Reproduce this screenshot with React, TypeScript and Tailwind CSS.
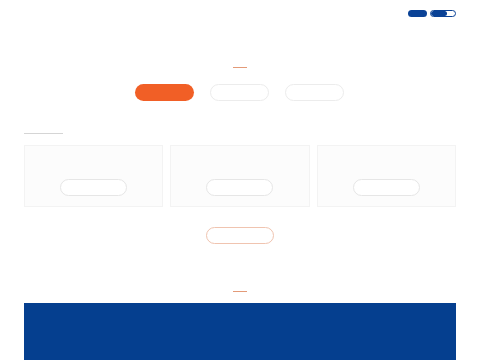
const Landing = () => {
    const tabs = ['active', 'idle', 'idle'];
    const cards = [1, 2, 3];

    return (
        <div className="w-[480px] h-[360px] bg-white overflow-hidden" style={{ fontFamily: '"Liberation Sans", Arial, sans-serif' }}>
            {/* Top bar */}
            <div className="flex justify-end items-center gap-[3px] pt-[10px] pr-[24px]">
                <div className="w-[19px] h-[7px] rounded-full bg-[#0a4296]" />
                <div className="w-[26px] h-[7px] rounded-full border border-[#0a4296] bg-white overflow-hidden flex">
                    <div className="w-[16px] h-full bg-[#0a4296] rounded-full" />
                </div>
            </div>

            <div className="px-[24px]">
                {/* Section title */}
                <div className="flex flex-col items-center">
                    <div className="mt-[50px] w-[14px] h-px bg-[#e39a78]" />
                    <div className="mt-[16px] flex gap-[16px] -translate-x-px">
                        {tabs.map((t, i) => (
                            <div
                                key={i}
                                className={
                                    t === 'active'
                                        ? 'w-[59px] h-[17px] rounded-full bg-[#f15f26]'
                                        : 'w-[59px] h-[17px] rounded-full border border-[#ececec] bg-white'
                                }
                            />
                        ))}
                    </div>
                </div>

                {/* Cards */}
                <div className="mt-[32px] w-[39px] h-px bg-[#d5d5d5]" />
                <div className="mt-[11px] grid grid-cols-3 gap-[7px]">
                    {cards.map((c) => (
                        <div key={c} className="h-[62px] border border-[#f3f3f3] bg-[#fcfcfc] flex justify-center pt-[33px]">
                            <div className="w-[67px] h-[17px] rounded-full border border-[#e6e6e6] bg-white" />
                        </div>
                    ))}
                </div>

                <div className="flex flex-col items-center">
                    <div className="mt-[20px] w-[68px] h-[17px] rounded-full border border-[#f0c4b0] bg-white" />
                    <div className="mt-[47px] w-[14px] h-px bg-[#e39a78]" />
                </div>

                {/* Blue band */}
                <div className="mt-[11px] h-[80px] bg-[#053f8f]" />
            </div>
        </div>
    );
};

export default Landing;
